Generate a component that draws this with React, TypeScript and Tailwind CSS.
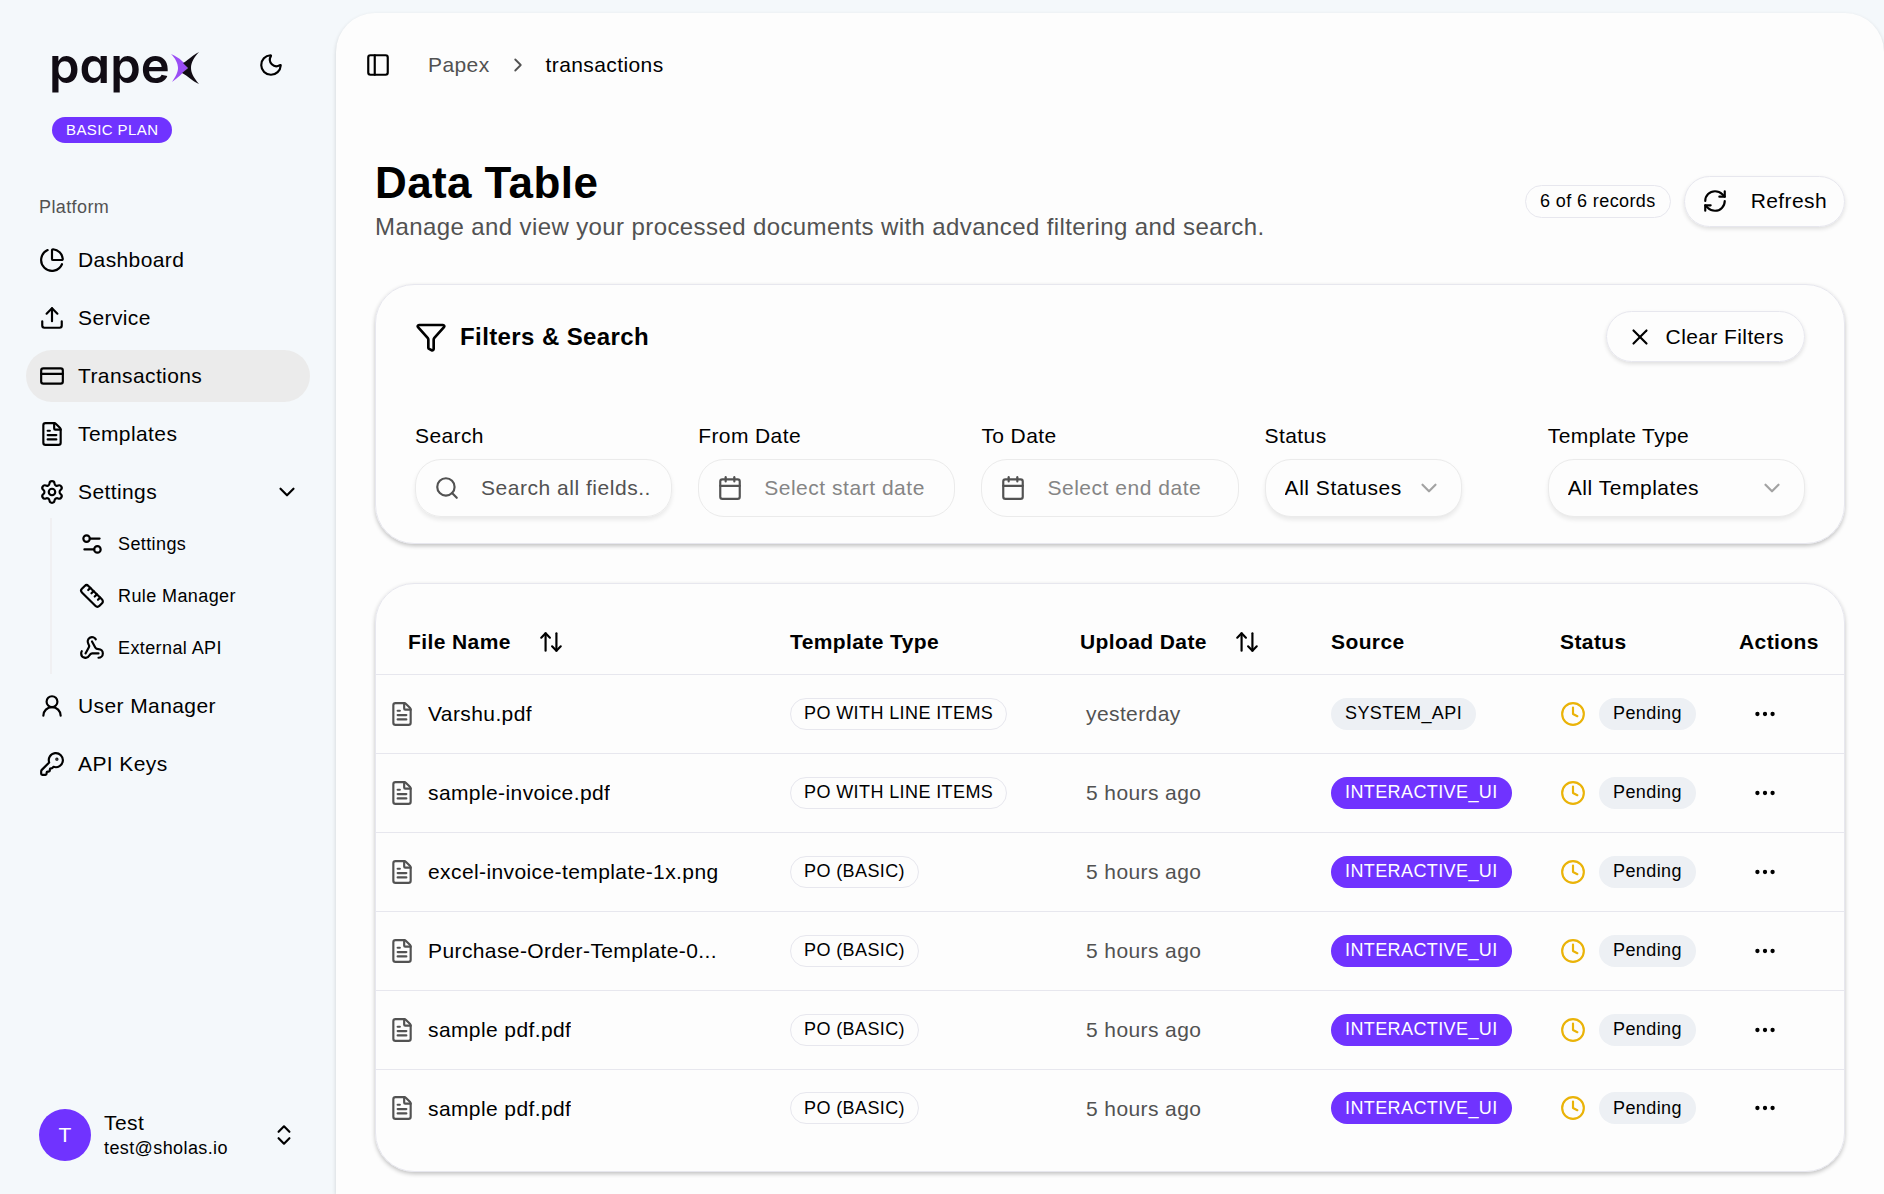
import { useState } from "react";
import {
  ArrowUpDown,
  Calendar,
  ChartPie,
  ChevronDown,
  ChevronRight,
  ChevronsUpDown,
  Clock,
  CreditCard,
  Ellipsis,
  FileText,
  Funnel,
  KeyRound,
  Moon,
  PanelLeft,
  RefreshCw,
  Ruler,
  Search,
  Settings,
  Settings2,
  Upload,
  UserRound,
  Webhook,
  X,
  type LucideIcon,
} from "lucide-react";

interface NavItem {
  label: string;
  icon: LucideIcon;
}

interface Transaction {
  fileName: string;
  templateType: string;
  uploadDate: string;
  source: string;
  status: string;
}

const mainItems: NavItem[] = [
  { label: "Dashboard", icon: ChartPie },
  { label: "Service", icon: Upload },
  { label: "Transactions", icon: CreditCard },
  { label: "Templates", icon: FileText },
];

const settingsItems: NavItem[] = [
  { label: "Settings", icon: Settings2 },
  { label: "Rule Manager", icon: Ruler },
  { label: "External API", icon: Webhook },
];

const adminItems: NavItem[] = [
  { label: "User Manager", icon: UserRound },
  { label: "API Keys", icon: KeyRound },
];

const transactions: Transaction[] = [
  {
    fileName: "Varshu.pdf",
    templateType: "PO WITH LINE ITEMS",
    uploadDate: "yesterday",
    source: "SYSTEM_API",
    status: "Pending",
  },
  {
    fileName: "sample-invoice.pdf",
    templateType: "PO WITH LINE ITEMS",
    uploadDate: "5 hours ago",
    source: "INTERACTIVE_UI",
    status: "Pending",
  },
  {
    fileName: "excel-invoice-template-1x.png",
    templateType: "PO (BASIC)",
    uploadDate: "5 hours ago",
    source: "INTERACTIVE_UI",
    status: "Pending",
  },
  {
    fileName: "Purchase-Order-Template-0...",
    templateType: "PO (BASIC)",
    uploadDate: "5 hours ago",
    source: "INTERACTIVE_UI",
    status: "Pending",
  },
  {
    fileName: "sample pdf.pdf",
    templateType: "PO (BASIC)",
    uploadDate: "5 hours ago",
    source: "INTERACTIVE_UI",
    status: "Pending",
  },
  {
    fileName: "sample pdf.pdf",
    templateType: "PO (BASIC)",
    uploadDate: "5 hours ago",
    source: "INTERACTIVE_UI",
    status: "Pending",
  },
];

function Logo() {
  return (
    <svg width="152" height="64" viewBox="-4 -18 152 64" aria-label="papex" role="img">
      <text
        x="-3"
        y="32"
        fontSize="49"
        fontWeight="600"
        fill="#110c14"
        className="font-['Inter',sans-serif] tracking-normal [font-feature-settings:'cv11']"
      >
        pape
      </text>
      <path d="M119 3C128 7 133 12 136 17C130 22 126 27 120 31C124 25 126 21 126 17C126 12 123 7 119 3Z" fill="#9a4df5" />
      <path d="M147 1C138 6 135 10 131 12L136 17L130 22C136 25 140 30 147 33C141 26 139 21 139 17C139 12 142 6 147 1Z" fill="#110c14" />
    </svg>
  );
}

function NavLink({ item, active = false }: { item: NavItem; active?: boolean }) {
  const Icon = item.icon;
  return (
    <a
      href="#"
      className={`flex h-[52px] items-center gap-[13px] rounded-full px-[13px] text-[21px] ${
        active ? "bg-[#ebebeb]" : ""
      }`}
    >
      <Icon size={26} />
      {item.label}
    </a>
  );
}

function Sidebar() {
  const [open, setOpen] = useState(true);

  return (
    <aside className="sticky top-0 flex h-screen w-[336px] shrink-0 flex-col px-[26px] pb-[33px]">
      <div className="flex items-center justify-between pt-[33px] pr-[26px] pl-[22px]">
        <Logo />
        <button type="button" aria-label="Toggle theme">
          <Moon size={26} />
        </button>
      </div>
      <span className="mt-5 ml-[26px] flex h-[26px] w-fit items-center rounded-full bg-[#7033ff] px-[14px] text-[15px] text-white">
        BASIC PLAN
      </span>

      <nav className="mt-[43px]">
        <h2 className="flex h-[42px] items-center px-[13px] text-[18px] text-[#525252]">Platform</h2>
        <div className="mt-[6px] flex flex-col gap-[6px]">
          {mainItems.map((item) => (
            <NavLink key={item.label} item={item} active={item.label === "Transactions"} />
          ))}
          <button
            type="button"
            aria-expanded={open}
            onClick={() => setOpen(!open)}
            className="flex h-[52px] items-center gap-[13px] rounded-full pr-[10px] pl-[13px] text-left text-[21px]"
          >
            <Settings size={26} />
            <span className="flex-1">Settings</span>
            <ChevronDown size={26} />
          </button>
        </div>
        {open && (
          <div className="ml-[24px] flex flex-col gap-[6px] border-l-2 border-[#f0f0f2] py-[3px] pl-[27px]">
            {settingsItems.map((item) => (
              <a key={item.label} href="#" className="flex h-[46px] items-center gap-[13px] text-[18px]">
                <item.icon size={26} />
                {item.label}
              </a>
            ))}
          </div>
        )}
        <div className="mt-[6px] flex flex-col gap-[6px]">
          {adminItems.map((item) => (
            <NavLink key={item.label} item={item} />
          ))}
        </div>
      </nav>

      {/* Account menu */}
      <button type="button" className="mt-auto flex items-center gap-[13px] px-[13px] text-left">
        <span className="flex size-[52px] items-center justify-center rounded-full bg-[#7033ff] text-[21px] text-white">
          T
        </span>
        <span className="flex-1">
          <span className="block text-[21px] leading-[26px]">Test</span>
          <span className="block text-[18px] leading-[24px]">test@sholas.io</span>
        </span>
        <ChevronsUpDown size={26} />
      </button>
    </aside>
  );
}

function DateField({ id, label, placeholder }: { id: string; label: string; placeholder: string }) {
  return (
    <div>
      <label htmlFor={id} className="block text-[21px] leading-[26px]">
        {label}
      </label>
      <div className="relative mt-[10px]">
        <Calendar size={26} className="absolute top-4 left-[19px] text-[#525252]" />
        <input
          id={id}
          type="text"
          placeholder={placeholder}
          className="h-[58px] w-full rounded-[26px] border border-[#ebebeb] pr-5 pl-[65px] text-[21px] tracking-wide placeholder:text-[#858585]"
        />
      </div>
    </div>
  );
}

function SelectField({
  id,
  label,
  option,
  width,
}: {
  id: string;
  label: string;
  option: string;
  width: string;
}) {
  return (
    <div>
      <label htmlFor={id} className="block text-[21px] leading-[26px]">
        {label}
      </label>
      <div className={`relative mt-[10px] ${width}`}>
        <select
          id={id}
          className="h-[58px] w-full appearance-none rounded-[26px] border border-[#ebebeb] bg-[#fdfdfd] pr-12 pl-[19px] text-[21px] tracking-wide shadow-[0_3px_4px_rgba(0,0,0,0.08)]"
        >
          <option>{option}</option>
        </select>
        <ChevronDown size={26} className="pointer-events-none absolute top-4 right-5 text-[#a3a3a3]" />
      </div>
    </div>
  );
}

function Filters() {
  return (
    <section className="mt-[39px] rounded-[39px] border border-[#e7e7ee] px-[39px] pt-[26px] pb-[26px] shadow-[0_2px_4px_rgba(0,0,0,0.24)]">
      <div className="flex items-center justify-between">
        <h2 className="flex items-center gap-[13px] text-[24px] font-bold">
          <Funnel size={32} />
          Filters &amp; Search
        </h2>
        <button
          type="button"
          className="flex h-[51px] items-center gap-[13px] rounded-full border border-[#e7e7ee] px-5 text-[21px] shadow-[0_2px_4px_rgba(0,0,0,0.12)]"
        >
          <X size={26} />
          Clear Filters
        </button>
      </div>

      <div className="mt-[61px] grid grid-cols-5 gap-[26px]">
        <div>
          <label htmlFor="search" className="block text-[21px] leading-[26px]">
            Search
          </label>
          <div className="relative mt-[10px]">
            <Search size={26} className="absolute top-4 left-[19px] text-[#525252]" />
            <input
              id="search"
              type="text"
              placeholder="Search all fields..."
              className="h-[58px] w-full rounded-[26px] border border-[#ebebeb] pr-5 pl-[65px] text-[21px] tracking-wide shadow-[0_3px_4px_rgba(0,0,0,0.08)] placeholder:text-[#525252]"
            />
          </div>
        </div>
        <DateField id="from-date" label="From Date" placeholder="Select start date" />
        <DateField id="to-date" label="To Date" placeholder="Select end date" />
        <SelectField id="status" label="Status" option="All Statuses" width="w-[197px]" />
        <SelectField id="template-type" label="Template Type" option="All Templates" width="w-full" />
      </div>
    </section>
  );
}

function TransactionsTable() {
  return (
    <section className="mt-[39px] overflow-hidden rounded-[39px] border border-[#e7e7ee] pt-[26px] pb-6 shadow-[0_2px_4px_rgba(0,0,0,0.24)]">
      <table className="w-full table-fixed text-left text-[21px]">
        <thead>
          <tr className="h-[64px] border-b border-[#e7e7ee]">
            <th className="pl-[32px]">
              <button type="button" className="flex items-center gap-[27px]">
                File Name
                <ArrowUpDown size={26} />
              </button>
            </th>
            <th className="w-[270px] pl-[13px]">Template Type</th>
            <th className="w-[271px] pl-[33px]">
              <button type="button" className="flex items-center gap-[27px]">
                Upload Date
                <ArrowUpDown size={26} />
              </button>
            </th>
            <th className="w-[229px] pl-[13px]">Source</th>
            <th className="w-[179px] pl-[13px]">Status</th>
            <th className="w-[118px] pl-[13px]">Actions</th>
          </tr>
        </thead>
        <tbody>
          {transactions.map((row, index) => (
            <tr key={index} className="h-[79px] border-b border-[#e7e7ee] last:h-[78px] last:border-b-0">
              <td className="pl-[13px]">
                <div className="flex items-center gap-[13px]">
                  <FileText size={26} className="shrink-0 text-[#525252]" />
                  <span className="truncate">{row.fileName}</span>
                </div>
              </td>
              <td className="pl-[13px]">
                <span className="flex h-[32px] w-fit items-center rounded-full border border-[#e7e7ee] px-[13px] text-[18px]">
                  {row.templateType}
                </span>
              </td>
              <td className="pl-[39px] text-[#525252]">{row.uploadDate}</td>
              <td className="pl-[13px]">
                <span
                  className={`flex h-[32px] w-fit items-center rounded-full px-[14px] text-[18px] ${
                    row.source === "SYSTEM_API" ? "bg-[#edf0f4]" : "bg-[#7033ff] text-white"
                  }`}
                >
                  {row.source}
                </span>
              </td>
              <td className="pl-[13px]">
                <div className="flex items-center gap-[13px]">
                  <Clock size={26} className="shrink-0 text-[#eab308]" />
                  <span className="flex h-[32px] items-center rounded-full bg-[#edf0f4] px-[14px] text-[18px]">
                    {row.status}
                  </span>
                </div>
              </td>
              <td className="pl-[26px]">
                <button type="button" aria-label="Open actions" className="flex">
                  <Ellipsis size={26} />
                </button>
              </td>
            </tr>
          ))}
        </tbody>
      </table>
    </section>
  );
}

export default function App() {
  return (
    <div className="flex min-h-screen bg-[#f4f8fb] font-['Liberation_Sans',Arial,sans-serif] tracking-wide text-black">
      <Sidebar />
      <main className="mt-[13px] min-w-0 flex-1 rounded-t-[39px] bg-[#fdfdfd] px-[39px] pb-5 shadow-[0_2px_4px_rgba(0,0,0,0.16)]">
        <header className="-ml-[10px] flex h-[104px] items-center text-[21px]">
          <button type="button" aria-label="Toggle sidebar">
            <PanelLeft size={26} />
          </button>
          <nav aria-label="Breadcrumb" className="ml-[37px] flex items-center gap-[17px]">
            <a href="#" className="text-[#525252]">
              Papex
            </a>
            <ChevronRight size={22} className="text-[#525252]" />
            <span>transactions</span>
          </nav>
        </header>

        <div className="mt-[40px] flex items-center justify-between">
          <div>
            <h1 className="text-[44px] leading-[52px] font-bold">Data Table</h1>
            <p className="text-[24px] leading-[36px] text-[#525252]">
              Manage and view your processed documents with advanced filtering and search.
            </p>
          </div>
          <div className="flex items-center gap-[13px]">
            <span className="flex h-[33px] items-center rounded-full border border-[#e7e7ee] px-[14px] text-[18px]">
              6 of 6 records
            </span>
            <button
              type="button"
              className="flex h-[51px] items-center gap-[23px] rounded-full border border-[#e7e7ee] px-[17px] text-[21px] shadow-[0_2px_4px_rgba(0,0,0,0.12)]"
            >
              <RefreshCw size={26} />
              Refresh
            </button>
          </div>
        </div>

        <Filters />
        <TransactionsTable />
      </main>
    </div>
  );
}
